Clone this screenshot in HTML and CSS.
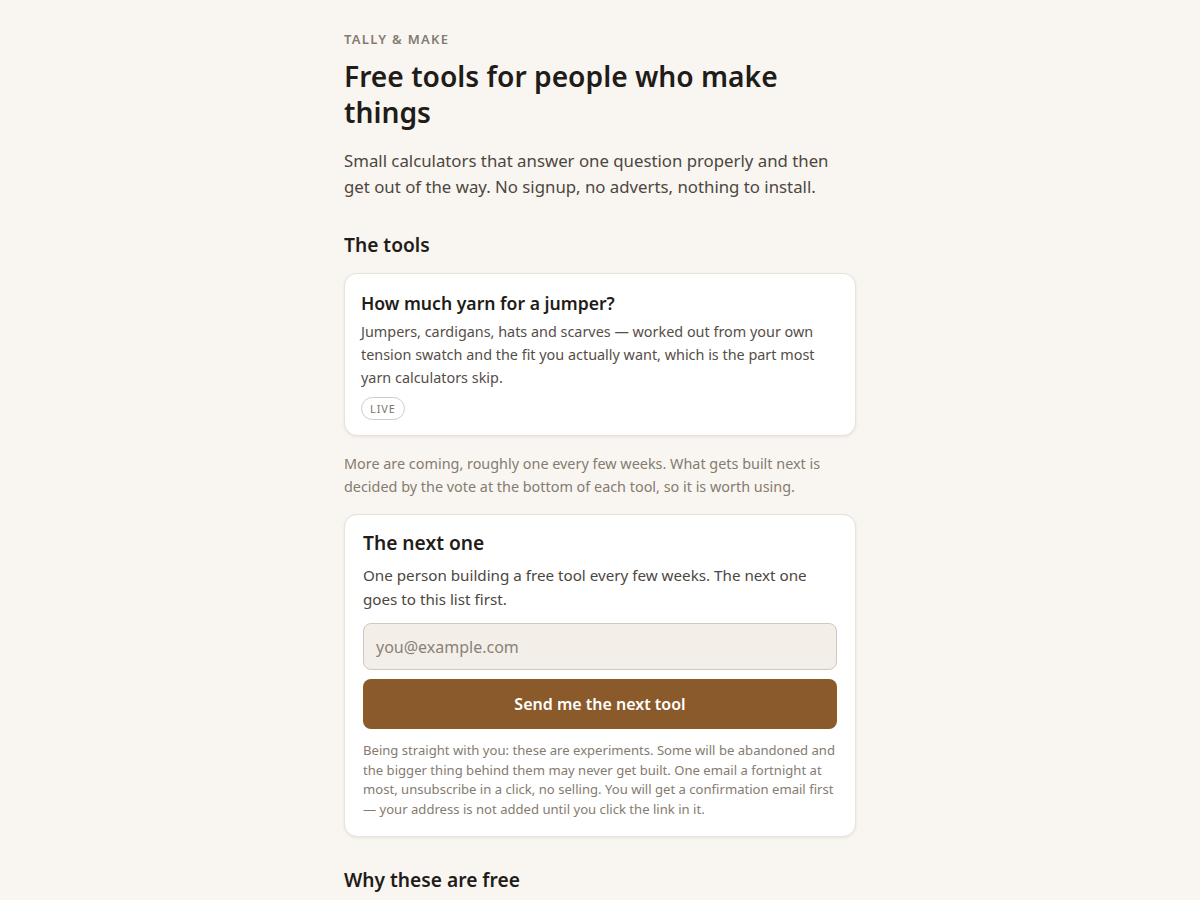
FILE: index.html
```html
<!DOCTYPE html>
<html lang="en">
<head>
<meta charset="utf-8">
<title>Tally &amp; Make</title>
<link rel="stylesheet" href="styles.css">
</head>
<body>
<main class="page">
  <p class="brand">Tally &amp; Make</p>
  <h1 class="title">Free tools for people who make things</h1>
  <p class="lede">Small calculators that answer one question properly and then get out of the way. No signup, no adverts, nothing to install.</p>

  <h2 class="section">The tools</h2>
  <article class="card tool">
    <h3 class="tool-title">How much yarn for a jumper?</h3>
    <p class="tool-desc">Jumpers, cardigans, hats and scarves — worked out from your own tension swatch and the fit you actually want, which is the part most yarn calculators skip.</p>
    <span class="badge">Live</span>
  </article>
  <p class="note">More are coming, roughly one every few weeks. What gets built next is decided by the vote at the bottom of each tool, so it is worth using.</p>

  <section class="card signup">
    <h2 class="signup-title">The next one</h2>
    <p class="signup-text">One person building a free tool every few weeks. The next one goes to this list first.</p>
    <form class="signup-form">
      <input class="email" type="email" placeholder="you@example.com">
      <button class="send" type="button">Send me the next tool</button>
    </form>
    <p class="fine">Being straight with you: these are experiments. Some will be abandoned and the bigger thing behind them may never get built. One email a fortnight at most, unsubscribe in a click, no selling. You will get a confirmation email first — your address is not added until you click the link in it.</p>
  </section>

  <h2 class="section why">Why these are free</h2>
</main>
</body>
</html>
```

FILE: styles.css
```css
* { box-sizing: border-box; }
html, body { margin: 0; padding: 0; }
body {
  background: #f9f6f1;
  color: #1f1c19;
  font-family: "Noto Sans", "DejaVu Sans", sans-serif;
}
.page {
  max-width: 560px;
  margin: 0 auto;
  padding: 30px 24px 40px;
}
.brand {
  margin: 0;
  font-size: 13px;
  font-weight: 600;
  letter-spacing: 0.1em;
  text-transform: uppercase;
  color: #857b70;
  line-height: 18px;
}
.title {
  margin: 10px 0 0;
  font-size: 28.2px;
  line-height: 36px;
  font-weight: 600;
  color: #1f1c19;
}
.lede {
  margin: 18px 0 0;
  font-size: 16.8px;
  line-height: 26px;
  color: #4d463f;
}
.section {
  margin: 31px 0 0;
  font-size: 19.2px;
  line-height: 28px;
  font-weight: 600;
}
.card {
  background: #fff;
  border: 1px solid #e8e2d9;
  border-radius: 13px;
  box-shadow: 0 1px 3px rgba(60, 40, 20, 0.09);
}
.tool {
  margin-top: 14px;
  padding: 16px 16px 15px;
}
.tool-title {
  margin: 0;
  font-size: 17.6px;
  line-height: 26px;
  font-weight: 600;
}
.tool-desc {
  margin: 4px 0 0;
  font-size: 14.4px;
  line-height: 23px;
  color: #554e47;
}
.badge {
  display: inline-block;
  margin-top: 8px;
  padding: 0 8px;
  border: 1px solid #d3ccc2;
  border-radius: 999px;
  font-size: 11px;
  line-height: 21px;
  letter-spacing: 0.08em;
  text-transform: uppercase;
  color: #7d746a;
}
.note {
  margin: 16px 0 0;
  font-size: 14.4px;
  line-height: 23px;
  color: #857b70;
}
.signup {
  margin-top: 16px;
  padding: 14px 18px 16px;
}
.signup-title {
  margin: 0;
  font-size: 19.2px;
  line-height: 28px;
  font-weight: 600;
}
.signup-text {
  margin: 6px 0 0;
  font-size: 15.2px;
  line-height: 24px;
  color: #4d463f;
}
.signup-form {
  margin-top: 12px;
  display: flex;
  flex-direction: column;
  gap: 9px;
}
.email {
  width: 100%;
  height: 47px;
  padding: 0 12px;
  border: 1px solid #cfc8bd;
  border-radius: 8px;
  background: #f3efe8;
  font-family: inherit;
  font-size: 16px;
  color: #1f1c19;
}
.email::placeholder { color: #8a8178; }
.send {
  width: 100%;
  height: 50px;
  border: 0;
  border-radius: 8px;
  background: #8b5a2b;
  color: #fff;
  font-family: inherit;
  font-size: 16px;
  font-weight: 600;
}
.fine {
  margin: 12px 0 0;
  font-size: 13.1px;
  line-height: 19.7px;
  color: #857b70;
}
.why { margin-top: 29px; }
```
